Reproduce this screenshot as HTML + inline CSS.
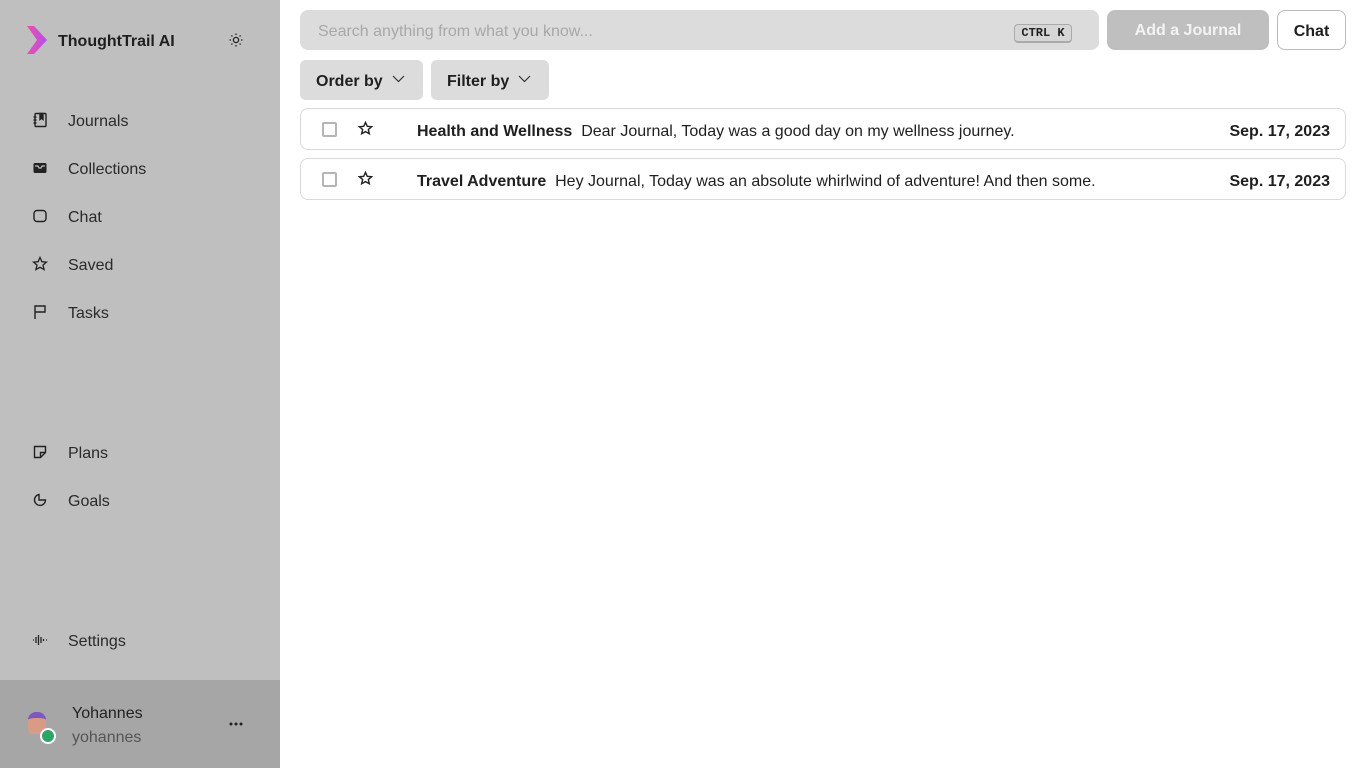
<!DOCTYPE html>
<html><head><style>
*{box-sizing:border-box;margin:0;padding:0}
body{width:1366px;height:768px;font-family:"Liberation Sans",sans-serif;background:#fff;color:#1f1f1f;position:relative;overflow:hidden}
.sb{position:absolute;left:0;top:0;width:280px;height:768px;background:#bfbfbf}
.logo{position:absolute;left:58px;top:33px;font-size:16px;font-weight:bold}
.nav{position:absolute;left:68px;font-size:16px;color:#2a2a2a}
.ic{position:absolute;left:32px;width:16px;height:16px}
.user{position:absolute;left:0;top:680px;width:280px;height:88px;background:#a6a6a6}
.abs{position:absolute}
.row{position:absolute;left:300px;width:1046px;height:42px;border:1px solid #d9d9d9;border-radius:8px;font-size:16px}
.cb{position:absolute;left:21px;top:13px;width:15px;height:15px;border:2px solid #b5b5b5;border-radius:2px}
</style></head><body>
<div class="sb">
<svg class="abs" style="left:26px;top:25px" width="22" height="30" viewBox="0 0 22 30"><defs><linearGradient id="g" x1="0" x2="1"><stop offset="0" stop-color="#ee4fa8"/><stop offset="1" stop-color="#b14ff0"/></linearGradient></defs><path d="M1 1h7l13 14L8 29H1l10-14z" fill="url(#g)"/></svg>
<div class="logo">ThoughtTrail AI</div>
<svg class="abs" style="left:229px;top:33px" width="14" height="14" viewBox="0 0 14 14" fill="none" stroke="#222" stroke-width="1.3"><circle cx="7" cy="7" r="2.6"/><path d="M7 0.5v1.5M7 12v1.5M0.5 7h1.5M12 7h1.5M2.4 2.4l1 1M10.6 10.6l1 1M2.4 11.6l1-1M10.6 3.4l1-1"/></svg>
<svg class="ic" style="top:112px" viewBox="0 0 16 16" fill="none" stroke="#222" stroke-width="1.4"><rect x="3" y="1.5" width="11" height="13" rx="1"/><path d="M8 1.5v6l1.5-1.3 1.5 1.3v-6z" fill="#222"/><path d="M1.5 5h3M1.5 8h3M1.5 11h3"/></svg>
<div class="nav" style="top:113px">Journals</div>
<svg class="ic" style="top:160px" viewBox="0 0 16 16"><rect x="1.5" y="3" width="13" height="10" rx="1.5" fill="#222"/><path d="M3 6h3l1 2h2l1-2h3" stroke="#bfbfbf" stroke-width="1.2" fill="none"/></svg>
<div class="nav" style="top:161px">Collections</div>
<svg class="ic" style="top:208px" viewBox="0 0 16 16" fill="none" stroke="#222" stroke-width="1.4"><rect x="2" y="2.5" width="12" height="11" rx="3"/></svg>
<div class="nav" style="top:209px">Chat</div>
<svg class="ic" style="top:256px" viewBox="0 0 16 16" fill="none" stroke="#222" stroke-width="1.3"><path d="M8 1.5l1.9 4.2 4.6.4-3.5 3 1.1 4.5L8 11.3l-4.1 2.3L5 9.1 1.5 6.1l4.6-.4z"/></svg>
<div class="nav" style="top:257px">Saved</div>
<svg class="ic" style="top:304px" viewBox="0 0 16 16" fill="none" stroke="#222" stroke-width="1.4"><path d="M3 15V2h10v6H3"/></svg>
<div class="nav" style="top:305px">Tasks</div>
<svg class="ic" style="top:444px" viewBox="0 0 16 16" fill="none" stroke="#222" stroke-width="1.4"><path d="M2.5 2.5h11v6l-5 5h-6z M8.5 13.5v-5h5"/></svg>
<div class="nav" style="top:445px">Plans</div>
<svg class="ic" style="top:492px" viewBox="0 0 16 16" fill="none" stroke="#222" stroke-width="1.4"><path d="M7 2.5A5.5 5.5 0 1 0 13.5 8H7z"/></svg>
<div class="nav" style="top:493px">Goals</div>
<svg class="ic" style="top:632px" viewBox="0 0 16 16" fill="none" stroke="#222" stroke-width="1.3"><path d="M1 8h1M4 5v6M6.5 3v10M9 5v6M11.5 7v2M14 8h1"/></svg>
<div class="nav" style="top:633px">Settings</div>
<div class="user">
<div class="abs" style="left:28px;top:32px;width:18px;height:22px;border-radius:8px 8px 4px 4px;background:#d99b85;border-top:6px solid #7a5ac0"></div>
<div class="abs" style="left:40px;top:48px;width:16px;height:16px;border-radius:50%;background:#2fa36a;border:2px solid #fff"></div>
<div class="abs" style="left:72px;top:25px;font-size:16px;color:#222">Yohannes</div>
<div class="abs" style="left:72px;top:49px;font-size:16px;color:#555">yohannes</div>
<svg class="abs" style="left:229px;top:42px" width="14" height="4" viewBox="0 0 14 4" fill="#222"><circle cx="2" cy="2" r="1.5"/><circle cx="7" cy="2" r="1.5"/><circle cx="12" cy="2" r="1.5"/></svg>
</div>
</div>
<div class="abs" style="left:300px;top:10px;width:799px;height:40px;background:#dcdcdc;border-radius:8px"></div>
<div class="abs" style="left:318px;top:23px;font-size:16px;color:#a8a8a8">Search anything from what you know...</div>
<div class="abs" style="left:1014px;top:24px;width:58px;height:19px;border:1px solid #aaa;border-bottom-width:2px;border-radius:4px;font-family:'Liberation Mono',monospace;font-size:12px;font-weight:bold;text-align:center;line-height:16px;color:#222;background:#d6d6d6">CTRL K</div>
<div class="abs" style="left:1107px;top:10px;width:162px;height:40px;background:#bfbfbf;border-radius:8px;color:#f3f3f3;font-weight:bold;font-size:16px;text-align:center;line-height:42px">Add a Journal</div>
<div class="abs" style="left:1277px;top:10px;width:69px;height:40px;border:1px solid #bbb;border-radius:8px;font-weight:bold;font-size:16px;text-align:center;line-height:41px">Chat</div>
<div class="abs" style="left:300px;top:60px;width:123px;height:40px;background:#dcdcdc;border-radius:6px;font-weight:bold;font-size:16px;line-height:43px;padding-left:16px">Order by</div>
<div class="abs" style="left:431px;top:60px;width:118px;height:40px;background:#dcdcdc;border-radius:6px;font-weight:bold;font-size:16px;line-height:43px;padding-left:16px">Filter by</div>
<svg class="abs" style="left:392px;top:75px" width="13" height="8" viewBox="0 0 13 8" fill="none" stroke="#333" stroke-width="1.2"><path d="M1 1l5.5 5.5L12 1"/></svg>
<svg class="abs" style="left:518px;top:75px" width="13" height="8" viewBox="0 0 13 8" fill="none" stroke="#333" stroke-width="1.2"><path d="M1 1l5.5 5.5L12 1"/></svg>
<div class="row" style="top:108px"><div class="cb"></div>
<svg class="abs" style="left:57px;top:12px" width="15" height="15" viewBox="0 0 16 16" fill="none" stroke="#222" stroke-width="1.5"><path d="M8 1.5l1.9 4.2 4.6.4-3.5 3 1.1 4.5L8 11.3l-4.1 2.3L5 9.1 1.5 6.1l4.6-.4z"/></svg>
<div class="abs" style="left:116px;top:14px"><b>Health and Wellness</b>&nbsp; Dear Journal, Today was a good day on my wellness journey.</div>
<div class="abs" style="right:15px;top:14px;font-weight:bold">Sep. 17, 2023</div></div>
<div class="row" style="top:158px"><div class="cb"></div>
<svg class="abs" style="left:57px;top:12px" width="15" height="15" viewBox="0 0 16 16" fill="none" stroke="#222" stroke-width="1.5"><path d="M8 1.5l1.9 4.2 4.6.4-3.5 3 1.1 4.5L8 11.3l-4.1 2.3L5 9.1 1.5 6.1l4.6-.4z"/></svg>
<div class="abs" style="left:116px;top:14px"><b>Travel Adventure</b>&nbsp; Hey Journal, Today was an absolute whirlwind of adventure! And then some.</div>
<div class="abs" style="right:15px;top:14px;font-weight:bold">Sep. 17, 2023</div></div>
</body></html>
